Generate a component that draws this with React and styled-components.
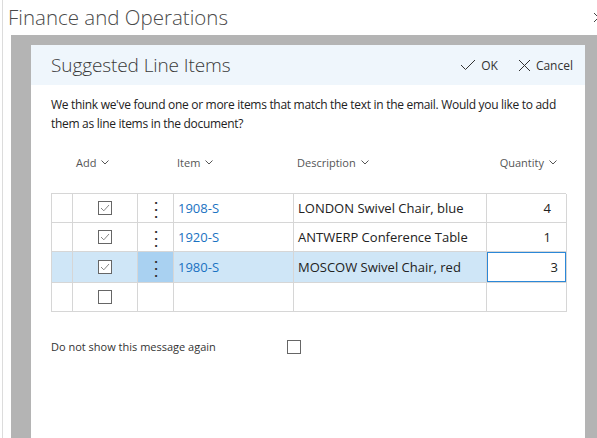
import React from "react";
import styled, { createGlobalStyle } from "styled-components";

const GlobalStyle = createGlobalStyle`
  html, body {
    margin: 0;
    padding: 0;
    background: #fff;
    overflow: hidden;
  }
  body {
    font-family: "Open Sans", "Noto Sans", "Liberation Sans", sans-serif;
    color: #222;
  }
`;

const Page = styled.div`
  width: 595px;
  height: 438px;
  overflow: hidden;
  display: flex;
  flex-direction: column;
  box-sizing: border-box;
  margin-left: 2px;
  border-left: 1px solid #dcdcdc;
`;

const TopBar = styled.div`
  height: 35px;
  flex-shrink: 0;
  display: flex;
  align-items: center;
  justify-content: space-between;
  padding-left: 5px;
  box-sizing: border-box;
`;

const AppTitle = styled.div`
  font-size: 20.5px;
  font-weight: 300;
  color: #4a4a4a;
  margin-top: -2px;
`;

const CloseGlyph = styled.svg`
  margin-right: -7px;
  margin-top: 0;
  flex-shrink: 0;
`;

const Overlay = styled.div`
  flex: 1;
  margin-left: 8px;
  background: #b4b4b4;
  padding: 10px 0 0 20px;
  display: flex;
`;

const Dialog = styled.div`
  width: 554px;
  background: #fff;
  display: flex;
  flex-direction: column;
`;

const Header = styled.div`
  height: 40px;
  background: #eff6fc;
  display: flex;
  align-items: center;
  justify-content: space-between;
  padding: 0 12px 0 20px;
`;

const DialogTitle = styled.h2`
  margin: 0;
  font-size: 19px;
  font-weight: 300;
  color: #3a3a3a;
  letter-spacing: -0.1px;
`;

const Actions = styled.div`
  display: flex;
  align-items: center;
  gap: 20px;
`;

const ActionButton = styled.button`
  border: none;
  background: none;
  padding: 0;
  display: flex;
  align-items: center;
  gap: 5px;
  font-family: inherit;
  font-size: 12px;
  color: #333;
  cursor: pointer;
`;

const Body = styled.div`
  padding: 10px 20px 0 20px;
`;

const Message = styled.p`
  margin: 0;
  font-size: 12px;
  line-height: 19px;
  color: #222;
  letter-spacing: -0.3px;
`;

const Grid = styled.div`
  margin-top: 11px;
  width: 515px;
`;

const HeadRow = styled.div`
  display: grid;
  grid-template-columns: 21px 65px 36px 120px 193px 80px;
  height: 36px;
  align-items: center;
  margin-bottom: 13px;
`;

const HeadCell = styled.div`
  font-size: 11px;
  color: #555;
  display: flex;
  align-items: center;
  gap: 5px;
  padding: 0 ${(p) => (p.$right ? "9px" : "4px")};
  justify-content: ${(p) => (p.$right ? "flex-end" : "flex-start")};
`;

const Table = styled.div`
  border-top: 1px solid #d6d6d6;
  border-left: 1px solid #d6d6d6;
`;

const Row = styled.div`
  display: grid;
  grid-template-columns: 21px 65px 36px 120px 193px 80px;
  height: ${(p) => (p.$selected ? "31px" : "29px")};
  background: ${(p) => (p.$selected ? "#cfe6f7" : "#fff")};
`;

const Cell = styled.div`
  border-right: 1px solid #d6d6d6;
  border-bottom: 1px solid #d6d6d6;
  display: flex;
  align-items: center;
  padding: 0 4px;
  font-size: 13px;
  overflow: hidden;
  white-space: nowrap;
  justify-content: ${(p) =>
    p.$center ? "center" : p.$right ? "flex-end" : "flex-start"};
  background: ${(p) => (p.$dark ? "#a9d1f1" : "transparent")};
  ${(p) => p.$right && "padding-right: 15px;"}
`;

const ItemLink = styled.span`
  color: #1a72c2;
`;

const Dots = styled.span`
  font-size: 18px;
  font-weight: 400;
  color: #333;
  line-height: 1;
  transform: scaleY(1.1);
`;

const QtyCell = styled.div`
  border-bottom: 1px solid #d6d6d6;
  border-right: 1px solid #d6d6d6;
  display: flex;
`;

const QtyInput = styled.div`
  flex: 1;
  border: 1px solid #2b88d8;
  background: #fff;
  display: flex;
  align-items: center;
  justify-content: flex-end;
  padding-right: 7px;
  font-size: 13px;
`;

const Box = styled.span`
  width: 12px;
  height: 12px;
  border: 1px solid #666;
  display: inline-flex;
  align-items: center;
  justify-content: center;
  background: #fff;
`;

const Footer = styled.div`
  margin-top: 27px;
  display: flex;
  align-items: center;
`;

const FooterLabel = styled.span`
  font-size: 11px;
  color: #333;
  width: 236px;
`;

const Chevron = () => (
  <svg width="8" height="5" viewBox="0 0 8 5">
    <path d="M0.5 0.5 L4 4 L7.5 0.5" fill="none" stroke="#555" strokeWidth="1" />
  </svg>
);

const Check = ({ color = "#777" }) => (
  <svg width="10" height="8" viewBox="0 0 10 8">
    <path d="M1 4 L3.8 6.8 L9 1" fill="none" stroke={color} strokeWidth="0.9" />
  </svg>
);

const CheckBox = ({ checked }) => <Box>{checked && <Check />}</Box>;

const rows = [
  { item: "1908-S", desc: "LONDON Swivel Chair, blue", qty: "4" },
  { item: "1920-S", desc: "ANTWERP Conference Table", qty: "1" },
  { item: "1980-S", desc: "MOSCOW Swivel Chair, red", qty: "3", selected: true },
];

export default function App() {
  return (
    <>
      <GlobalStyle />
      <Page>
        <TopBar>
          <AppTitle>Finance and Operations</AppTitle>
          <CloseGlyph width="11" height="11" viewBox="0 0 11 11">
            <path d="M1 1 L10 10 M10 1 L1 10" stroke="#444" strokeWidth="1" />
          </CloseGlyph>
        </TopBar>
        <Overlay>
          <Dialog>
            <Header>
              <DialogTitle>Suggested Line Items</DialogTitle>
              <Actions>
                <ActionButton>
                  <svg width="16" height="12" viewBox="0 0 16 12">
                    <path d="M1 6 L5.5 10.5 L15 1" fill="none" stroke="#333" strokeWidth="1" />
                  </svg>
                  OK
                </ActionButton>
                <ActionButton>
                  <svg width="13" height="13" viewBox="0 0 13 13">
                    <path d="M1 1 L12 12 M12 1 L1 12" stroke="#333" strokeWidth="1" />
                  </svg>
                  Cancel
                </ActionButton>
              </Actions>
            </Header>
            <Body>
              <Message>
                We think we've found one or more items that match the text in the email. Would you like to add them as line items in the document?
              </Message>
              <Grid>
                <HeadRow>
                  <span />
                  <HeadCell>
                    Add <Chevron />
                  </HeadCell>
                  <span />
                  <HeadCell>
                    Item <Chevron />
                  </HeadCell>
                  <HeadCell>
                    Description <Chevron />
                  </HeadCell>
                  <HeadCell $right>
                    Quantity <Chevron />
                  </HeadCell>
                </HeadRow>
                <Table>
                  {rows.map((r) => (
                    <Row key={r.item} $selected={r.selected}>
                      <Cell />
                      <Cell $center>
                        <CheckBox checked />
                      </Cell>
                      <Cell $center $dark={r.selected}>
                        <Dots>⋮</Dots>
                      </Cell>
                      <Cell>
                        <ItemLink>{r.item}</ItemLink>
                      </Cell>
                      <Cell>{r.desc}</Cell>
                      {r.selected ? (
                        <QtyCell>
                          <QtyInput>{r.qty}</QtyInput>
                        </QtyCell>
                      ) : (
                        <Cell $right>{r.qty}</Cell>
                      )}
                    </Row>
                  ))}
                  <Row>
                    <Cell />
                    <Cell $center>
                      <CheckBox />
                    </Cell>
                    <Cell />
                    <Cell />
                    <Cell />
                    <Cell />
                  </Row>
                </Table>
              </Grid>
              <Footer>
                <FooterLabel>Do not show this message again</FooterLabel>
                <CheckBox />
              </Footer>
            </Body>
          </Dialog>
        </Overlay>
      </Page>
    </>
  );
}
